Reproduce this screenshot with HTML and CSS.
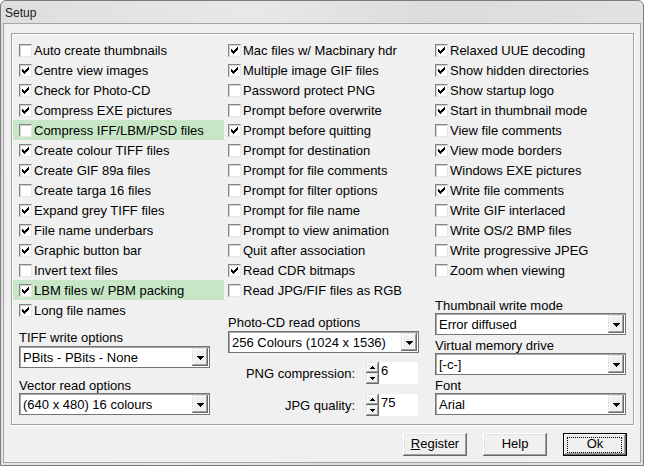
FILE: index.html
```html
<!DOCTYPE html>
<html>
<head>
<meta charset="utf-8">
<title>Setup</title>
<link rel="stylesheet" href="styles.css">
</head>
<body>
<svg class="defs" width="0" height="0">
  <symbol id="ck" viewBox="0 0 11 11"><path d="M8 2h1v1H8z M7 3h2v1H7z M2 4h1v1H2z M6 4h3v1H6z M2 5h2v1H2z M5 5h3v1H5z M2 6h5v1H2z M3 7h3v1H3z M4 8h1v1H4z" fill="#000"/></symbol>
  <symbol id="dn" viewBox="0 0 7 4"><path d="M0 0h7v1H0z M1 1h5v1H1z M2 2h3v1H2z M3 3h1v1H3z" fill="#000"/></symbol>
  <symbol id="up5" viewBox="0 0 5 3"><path d="M2 0h1v1H2z M1 1h3v1H1z M0 2h5v1H0z" fill="#000"/></symbol>
  <symbol id="dn5" viewBox="0 0 5 3"><path d="M0 0h5v1H0z M1 1h3v1H1z M2 2h1v1H2z" fill="#000"/></symbol>
</svg>
<div class="window">
  <div class="titlebar">Setup</div>
  <div class="client">
    <div class="group">
      <div class="col c1">
        <div class="row"><span class="cb"></span><span>Auto create thumbnails</span></div>
        <div class="row"><span class="cb"><svg class="ck"><use href="#ck"/></svg></span><span>Centre view images</span></div>
        <div class="row"><span class="cb"><svg class="ck"><use href="#ck"/></svg></span><span>Check for Photo-CD</span></div>
        <div class="row"><span class="cb"><svg class="ck"><use href="#ck"/></svg></span><span>Compress EXE pictures</span></div>
        <div class="row hl"><span class="cb"></span><span>Compress IFF/LBM/PSD files</span></div>
        <div class="row"><span class="cb"><svg class="ck"><use href="#ck"/></svg></span><span>Create colour TIFF files</span></div>
        <div class="row"><span class="cb"><svg class="ck"><use href="#ck"/></svg></span><span>Create GIF 89a files</span></div>
        <div class="row"><span class="cb"></span><span>Create targa 16 files</span></div>
        <div class="row"><span class="cb"><svg class="ck"><use href="#ck"/></svg></span><span>Expand grey TIFF files</span></div>
        <div class="row"><span class="cb"><svg class="ck"><use href="#ck"/></svg></span><span>File name underbars</span></div>
        <div class="row"><span class="cb"><svg class="ck"><use href="#ck"/></svg></span><span>Graphic button bar</span></div>
        <div class="row"><span class="cb"></span><span>Invert text files</span></div>
        <div class="row hl"><span class="cb"><svg class="ck"><use href="#ck"/></svg></span><span>LBM files w/ PBM packing</span></div>
        <div class="row"><span class="cb"><svg class="ck"><use href="#ck"/></svg></span><span>Long file names</span></div>
        <div class="lbl l-tiff">TIFF write options</div>
        <div class="combo cb-tiff"><span class="val">PBits - PBits - None</span><span class="dbtn"><svg class="arr"><use href="#dn"/></svg></span></div>
        <div class="lbl l-vec">Vector read options</div>
        <div class="combo"><span class="val">(640 x 480) 16 colours</span><span class="dbtn"><svg class="arr"><use href="#dn"/></svg></span></div>
      </div>
      <div class="col c2">
        <div class="row"><span class="cb"><svg class="ck"><use href="#ck"/></svg></span><span>Mac files w/ Macbinary hdr</span></div>
        <div class="row"><span class="cb"><svg class="ck"><use href="#ck"/></svg></span><span>Multiple image GIF files</span></div>
        <div class="row"><span class="cb"></span><span>Password protect PNG</span></div>
        <div class="row"><span class="cb"></span><span>Prompt before overwrite</span></div>
        <div class="row"><span class="cb"><svg class="ck"><use href="#ck"/></svg></span><span>Prompt before quitting</span></div>
        <div class="row"><span class="cb"></span><span>Prompt for destination</span></div>
        <div class="row"><span class="cb"></span><span>Prompt for file comments</span></div>
        <div class="row"><span class="cb"></span><span>Prompt for filter options</span></div>
        <div class="row"><span class="cb"></span><span>Prompt for file name</span></div>
        <div class="row"><span class="cb"></span><span>Prompt to view animation</span></div>
        <div class="row"><span class="cb"></span><span>Quit after association</span></div>
        <div class="row"><span class="cb"><svg class="ck"><use href="#ck"/></svg></span><span>Read CDR bitmaps</span></div>
        <div class="row"><span class="cb"></span><span>Read JPG/FIF files as RGB</span></div>
        <div class="lbl l-pcd">Photo-CD read options</div>
        <div class="combo cb-pcd"><span class="val">256 Colours (1024 x 1536)</span><span class="dbtn"><svg class="arr"><use href="#dn"/></svg></span></div>
        <div class="spinrow sr1">
          <span class="slabel">PNG compression:</span>
          <span class="spin"><span class="sbtn"><svg class="sarr"><use href="#up5"/></svg></span><span class="sbtn"><svg class="sarr"><use href="#dn5"/></svg></span></span>
          <span class="field">6</span>
        </div>
        <div class="spinrow sr2">
          <span class="slabel">JPG quality:</span>
          <span class="spin"><span class="sbtn"><svg class="sarr"><use href="#up5"/></svg></span><span class="sbtn"><svg class="sarr"><use href="#dn5"/></svg></span></span>
          <span class="field">75</span>
        </div>
      </div>
      <div class="col c3">
        <div class="row"><span class="cb"><svg class="ck"><use href="#ck"/></svg></span><span>Relaxed UUE decoding</span></div>
        <div class="row"><span class="cb"><svg class="ck"><use href="#ck"/></svg></span><span>Show hidden directories</span></div>
        <div class="row"><span class="cb"><svg class="ck"><use href="#ck"/></svg></span><span>Show startup logo</span></div>
        <div class="row"><span class="cb"><svg class="ck"><use href="#ck"/></svg></span><span>Start in thumbnail mode</span></div>
        <div class="row"><span class="cb"></span><span>View file comments</span></div>
        <div class="row"><span class="cb"><svg class="ck"><use href="#ck"/></svg></span><span>View mode borders</span></div>
        <div class="row"><span class="cb"></span><span>Windows EXE pictures</span></div>
        <div class="row"><span class="cb"><svg class="ck"><use href="#ck"/></svg></span><span>Write file comments</span></div>
        <div class="row"><span class="cb"></span><span>Write GIF interlaced</span></div>
        <div class="row"><span class="cb"></span><span>Write OS/2 BMP files</span></div>
        <div class="row"><span class="cb"></span><span>Write progressive JPEG</span></div>
        <div class="row"><span class="cb"></span><span>Zoom when viewing</span></div>
        <div class="lbl l-thumb">Thumbnail write mode</div>
        <div class="combo"><span class="val">Error diffused</span><span class="dbtn"><svg class="arr"><use href="#dn"/></svg></span></div>
        <div class="lbl l-small">Virtual memory drive</div>
        <div class="combo"><span class="val">[-c-]</span><span class="dbtn"><svg class="arr"><use href="#dn"/></svg></span></div>
        <div class="lbl l-small">Font</div>
        <div class="combo"><span class="val">Arial</span><span class="dbtn"><svg class="arr"><use href="#dn"/></svg></span></div>
      </div>
    </div>
    <div class="buttons">
      <div class="pbtn"><u>R</u>egister</div>
      <div class="pbtn">Help</div>
      <div class="pbtn default">Ok<span class="focus"></span></div>
    </div>
  </div>
</div>
</body>
</html>
```
FILE: styles.css
```css
html, body {
  margin: 0;
  padding: 0;
}
body {
  background: #ffffff;
  font-family: "Liberation Sans", Arial, sans-serif;
  font-size: 13px;
  color: #000;
}
.defs {
  position: absolute;
  width: 0;
  height: 0;
  overflow: hidden;
}
.window {
  width: 644px;
  height: 466px;
  box-sizing: border-box;
  border: 1px solid #7c7c7c;
  border-radius: 6px 6px 0 0;
  background: linear-gradient(100deg, #dedede 0%, #e8e8e8 35%, #dcdcdc 60%, #e4e4e4 100%);
  display: flex;
  flex-direction: column;
}
.titlebar {
  height: 22px;
  line-height: 24px;
  padding-left: 4px;
  font-size: 12px;
  color: #1a1a1a;
}
.client {
  flex: 1;
  margin: 0 2px 2px 2px;
  border: 1px solid #a5a5a5;
  background: #f0f0f0;
  padding: 9px 6px 0 7px;
}
.group {
  width: 623px;
  height: 392px;
  box-sizing: border-box;
  border: 1px solid #a0a0a0;
  box-shadow: inset 1px 1px 0 #ffffff, 1px 1px 0 #ffffff;
  padding: 6px 0 0 1px;
  display: grid;
  grid-template-columns: 214px 206px 199px;
  align-items: start;
}
.col {
  display: flex;
  flex-direction: column;
}
.row {
  height: 20px;
  display: flex;
  align-items: center;
  gap: 2px;
  white-space: nowrap;
}
.c1 .row {
  padding-left: 6px;
  margin-right: 3px;
}
.c2 .row {
  padding-left: 1px;
}
.c3 .row {
  padding-left: 2px;
}
.row.hl {
  background: #c6e6c6;
}
.cb {
  width: 13px;
  height: 13px;
  flex: none;
  box-sizing: border-box;
  border: 1px solid;
  border-color: #858585 #e6e6e6 #e6e6e6 #858585;
  background: #ffffff;
  box-shadow: inset 1px 1px 0 #d2d2d2;
  display: block;
}
.ck {
  display: block;
  width: 11px;
  height: 11px;
}
.lbl {
  height: 15px;
  line-height: 15px;
  white-space: nowrap;
}
.c1 .lbl {
  margin-left: 6px;
}
.c2 .lbl {
  margin-left: 1px;
}
.c3 .lbl {
  margin-left: 2px;
}
.l-tiff {
  margin-top: 10px;
  margin-bottom: 1px;
}
.l-vec {
  margin-top: 10px;
}
.l-pcd {
  margin-top: 15px;
  margin-bottom: 1px;
}
.l-thumb {
  margin-top: 18px;
}
.l-small {
  margin-top: 3px;
}
.combo {
  width: 191px;
  height: 22px;
  box-sizing: border-box;
  border: 1px solid #747474;
  box-shadow: inset 1px 1px 0 #a8a8a8;
  padding: 1px;
  background: #ffffff;
  display: flex;
}
.c1 .combo {
  margin-left: 6px;
}
.c2 .combo {
  margin-left: 1px;
}
.c3 .combo {
  margin-left: 2px;
}
.combo .val {
  flex: 1;
  padding-left: 2px;
  line-height: 19px;
  white-space: nowrap;
  overflow: hidden;
}
.dbtn {
  width: 16px;
  height: 18px;
  flex: none;
  box-sizing: border-box;
  background: #f0f0f0;
  box-shadow: inset -1px -1px 0 #696969, inset 1px 1px 0 #e3e3e3, inset -2px -2px 0 #a0a0a0, inset 2px 2px 0 #ffffff;
  display: flex;
  align-items: center;
  justify-content: center;
}
.arr {
  width: 7px;
  height: 4px;
  display: block;
  margin-top: 1px;
}
.spinrow {
  width: 190px;
  height: 22px;
  margin-left: 1px;
  display: flex;
  align-items: center;
}
.sr1 {
  margin-top: 9px;
}
.sr2 {
  margin-top: 10px;
}
.slabel {
  flex: 1;
  text-align: right;
  margin-right: 11px;
  white-space: nowrap;
}
.spin {
  width: 13px;
  height: 22px;
  display: flex;
  flex-direction: column;
  flex: none;
}
.sbtn {
  height: 11px;
  box-sizing: border-box;
  background: #f0f0f0;
  box-shadow: inset -1px -1px 0 #696969, inset 1px 1px 0 #e3e3e3, inset -2px -2px 0 #a0a0a0, inset 2px 2px 0 #ffffff;
  display: flex;
  align-items: center;
  justify-content: center;
}
.sarr {
  width: 5px;
  height: 3px;
  display: block;
}
.field {
  width: 39px;
  height: 22px;
  flex: none;
  background: #ffffff;
  padding-left: 2px;
  box-sizing: border-box;
  line-height: 17px;
}
.buttons {
  margin-top: 8px;
  display: flex;
  justify-content: flex-end;
  gap: 16px;
  padding-right: 7px;
}
.pbtn {
  position: relative;
  width: 64px;
  height: 23px;
  box-sizing: border-box;
  background: #f0f0f0;
  box-shadow: inset -1px -1px 0 #696969, inset 1px 1px 0 #ffffff, inset -2px -2px 0 #a0a0a0, inset 2px 2px 0 #e3e3e3;
  text-align: center;
  line-height: 22px;
}
.pbtn u {
  text-decoration: underline;
}
.pbtn.default {
  border: 1px solid #000000;
  line-height: 20px;
}
.focus {
  position: absolute;
  left: 3px;
  right: 4px;
  top: 3px;
  bottom: 2px;
  border: 1px dotted #000000;
}
```
